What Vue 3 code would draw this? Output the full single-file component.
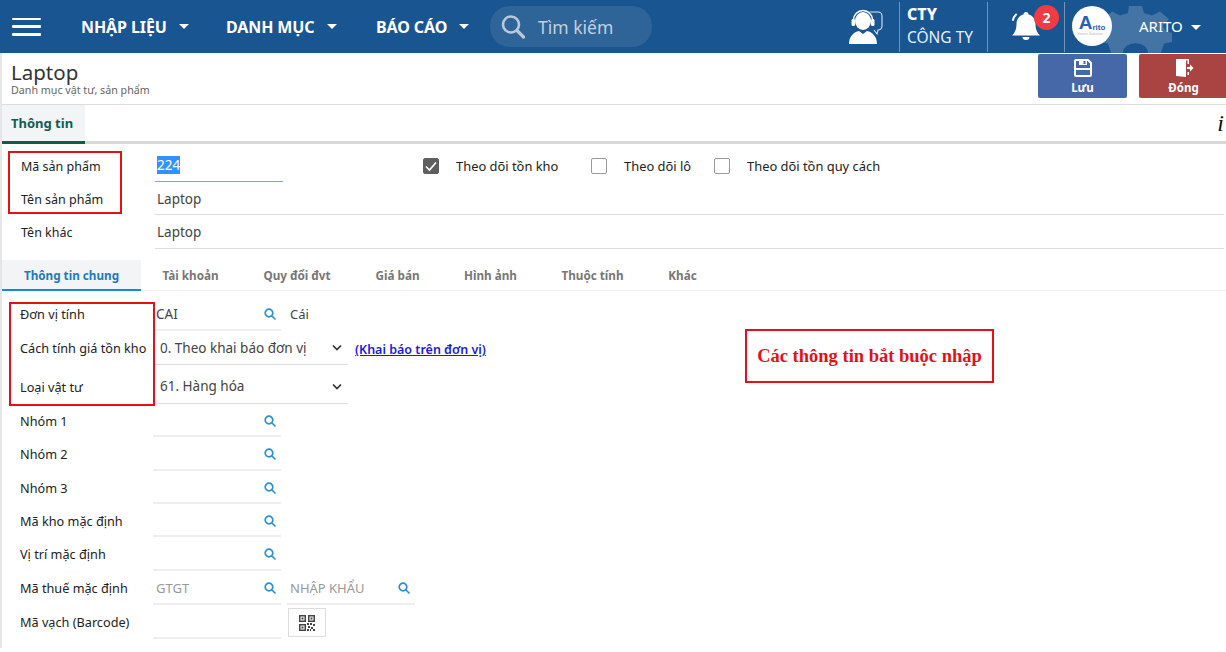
<template>
  <div class="page">
    <header class="topbar">
      <button class="burger"><span></span><span></span><span></span></button>
      <nav class="menu">
        <a v-for="m in menus" :key="m.label" class="menu-item" :style="{ width: m.width + 'px' }">
          {{ m.label }}<i class="caret"></i>
        </a>
      </nav>
      <div class="search">
        <svg width="26" height="26" viewBox="0 0 26 26" fill="none" stroke="#b9c9da" stroke-width="2.6" stroke-linecap="round">
          <circle cx="11" cy="10.5" r="8" />
          <path d="M17 16.5 L23.5 23" stroke-width="3.2" />
        </svg>
        <span>Tìm kiếm</span>
      </div>

      <div class="top-right">
        <svg class="agent" width="36" height="36" viewBox="0 0 36 36">
          <path d="M21 3h9a4 4 0 0 1 4 4v10a4 4 0 0 1-4 4l-1 4-3-4" fill="none" stroke="#fff" stroke-width="1.1" opacity=".85" />
          <ellipse cx="15" cy="12" rx="8" ry="9" fill="#fff" />
          <path d="M5 14V11a10 10 0 0 1 20 0v3" fill="none" stroke="#195591" stroke-width="1.4" />
          <path d="M5.5 11a9.500 9.500 0 0 1 19 0" fill="none" stroke="#fff" stroke-width="1.6" />
          <rect x="3.500" y="10" width="3.500" height="7" rx="1.500" fill="#fff" />
          <rect x="23" y="10" width="3.500" height="7" rx="1.500" fill="#fff" />
          <path d="M1 36c0-8 5-12 10-13l4 3 4-3c5 1 10 5 10 13z" fill="#fff" transform="translate(0,-1)" />
        </svg>
        <div class="company">
          <b>CTY</b>
          <span>CÔNG TY</span>
        </div>
        <div class="bell">
          <svg width="36" height="36" viewBox="0 0 36 36" fill="#fff">
            <path d="M18 3a2.500 2.500 0 0 1 2.500 2.500c4.500 1 7 5 7 9.500 0 6 2 9 4.500 11.500H4C6.500 24 8.500 21 8.500 15c0-4.500 2.500-8.500 7-9.500A2.500 2.500 0 0 1 18 3z" />
            <path d="M14.500 28h7a3.500 3 0 0 1-7 0z" />
            <path d="M5 11c.5-2.500 1.500-4 3-5.500" fill="none" stroke="#fff" stroke-width="2" stroke-linecap="round" />
          </svg>
          <span class="badge">2</span>
        </div>
        <div class="account">
          <svg class="gear" width="72" height="47" viewBox="0 0 72 60" preserveAspectRatio="none" fill="#4474a6">
            <path d="M29 0h13l2 9 8 3 8-5 9 10-6 8 3 8 6 1v12l-8 2-3 12H48a12 12 0 0 0-25 0H11l-3-12-8-2V34l6-1 3-8-6-8 9-10 8 5 8-3z" />
          </svg>
          <div class="avatar">
            <span class="logo-a">A</span><span class="logo-rito">rito</span>
            <span class="logo-sub">Smart Solution</span>
          </div>
          <span class="account-name">ARITO</span>
          <i class="caret"></i>
        </div>
      </div>
    </header>

    <main class="content">
      <section class="title-bar">
        <div class="title">
          <h1>Laptop</h1>
          <p>Danh mục vật tư, sản phẩm</p>
        </div>
        <div class="actions">
          <button class="act save">
            <svg width="20" height="20" viewBox="0 0 20 20" fill="none" stroke="#fff" stroke-width="2">
              <path d="M3 2h12l3 3v12a1 1 0 0 1-1 1H3a1 1 0 0 1-1-1V3a1 1 0 0 1 1-1z" stroke-linejoin="round" />
              <path d="M2 11h16" />
              <rect x="6" y="2" width="8" height="5" fill="#fff" stroke="none" />
              <rect x="10.500" y="3" width="2" height="3" fill="#4768a8" stroke="none" />
            </svg>
            Lưu
          </button>
          <button class="act close">
            <svg width="20" height="20" viewBox="0 0 20 20" fill="#fff">
              <path d="M2 1h10v18l-10-1z" />
              <path d="M12 1h3v5h-1.500V2.500H12zM12 14h1.500v3H15v-3z" />
              <path d="M13 9h3V6.500l3.500 3.500-3.500 3.500V11h-3z" />
            </svg>
            Đóng
          </button>
        </div>
      </section>

      <div class="main-tabs">
        <span class="main-tab">Thông tin</span>
        <span class="info-i">i</span>
      </div>

      <section class="head-form">
        <div class="row h33">
          <label>Mã sản phẩm</label>
          <div class="field code"><mark>224</mark></div>
          <div class="checks">
            <label v-for="c in checks" :key="c.label" class="check" :style="{ width: c.width + 'px' }">
              <span class="box" :class="{ on: c.on }">
                <svg v-if="c.on" width="14" height="14" viewBox="0 0 14 14" fill="none" stroke="#fff" stroke-width="1.600"><path d="M2 7.500 5.500 11 12 3.500" /></svg>
              </span>
              {{ c.label }}
            </label>
          </div>
        </div>
        <div class="row h33">
          <label>Tên sản phẩm</label>
          <div class="field wide">Laptop</div>
        </div>
        <div class="row h34">
          <label>Tên khác</label>
          <div class="field wide">Laptop</div>
        </div>
      </section>

      <div class="sub-tabs">
        <span v-for="(t, i) in subTabs" :key="t.label" class="sub-tab" :class="{ active: i === 0 }" :style="{ width: t.width + 'px' }">{{ t.label }}</span>
      </div>

      <section class="detail-form">
        <div v-for="r in rows" :key="r.label" class="row2" :class="{ low: r.low }" :style="{ height: r.h + 'px' }">
          <label>{{ r.label }}</label>

          <div v-if="r.select" class="field select">
            <span>{{ r.select }}</span>
            <svg width="10" height="7" viewBox="0 0 10 7" fill="none" stroke="#333" stroke-width="1.700"><path d="M1 1.500 5 5.500l4-4" /></svg>
          </div>
          <div v-else class="field lookup" :class="{ muted: r.muted }">
            <span>{{ r.value }}</span>
            <svg v-if="!r.plain" class="lens" width="12" height="12" viewBox="0 0 12 12" fill="none" stroke="#2f8fd0" stroke-width="1.700"><circle cx="5" cy="5" r="3.800" /><path d="M8 8l3 3" stroke-linecap="round" /></svg>
          </div>

          <span v-if="r.note" class="note">{{ r.note }}</span>
          <a v-if="r.link" class="link">{{ r.link }}</a>
          <div v-if="r.second" class="field lookup muted second">
            <span>{{ r.second }}</span>
            <svg class="lens" width="12" height="12" viewBox="0 0 12 12" fill="none" stroke="#2f8fd0" stroke-width="1.700"><circle cx="5" cy="5" r="3.800" /><path d="M8 8l3 3" stroke-linecap="round" /></svg>
          </div>
          <button v-if="r.qr" class="qr">
            <svg width="16" height="16" viewBox="0 0 16 16" fill="#444">
              <path d="M0 0h7v7H0zM1.500 1.500v4h4v-4zM9 0h7v7H9zM10.500 1.500v4h4v-4zM0 9h7v7H0zM1.500 10.500v4h4v-4z" fill-rule="evenodd" />
              <path d="M2.500 2.500h2v2h-2zM11.500 2.500h2v2h-2zM2.500 11.500h2v2h-2zM8 8h2v2H8zM11 8h2v2h-2zM14 9h2v2h-2zM9 11h2v2H9zM12 12h2v2h-2zM8 14h2v2H8zM11 14h1v2h-1zM14 14h2v2h-2z" />
            </svg>
          </button>
        </div>
      </section>

      <!-- khung đỏ chú thích nằm đè lên form -->
      <div class="mark-box box-a"></div>
      <div class="mark-box box-b"></div>
      <div class="mark-box box-c">Các thông tin bắt buộc nhập</div>
    </main>
  </div>
</template>

<script setup>
const menus = [
  { label: "NHẬP LIỆU", width: 145 },
  { label: "DANH MỤC", width: 150 },
  { label: "BÁO CÁO", width: 114 }
];

const checks = [
  { label: "Theo dõi tồn kho", on: true, width: 168 },
  { label: "Theo dõi lô", on: false, width: 123 },
  { label: "Theo dõi tồn quy cách", on: false, width: 180 }
];

const subTabs = [
  { label: "Thông tin chung", width: 139 },
  { label: "Tài khoản", width: 99 },
  { label: "Quy đổi đvt", width: 114 },
  { label: "Giá bán", width: 87 },
  { label: "Hình ảnh", width: 99 },
  { label: "Thuộc tính", width: 105 },
  { label: "Khác", width: 75 }
];

const rows = [
  { label: "Đơn vị tính", value: "CAI", note: "Cái", h: 34 },
  { label: "Cách tính giá tồn kho", select: "0. Theo khai báo đơn vị", link: "(Khai báo trên đơn vị)", h: 34 },
  { label: "Loại vật tư", select: "61. Hàng hóa", low: true, h: 39 },
  { label: "Nhóm 1", h: 33 },
  { label: "Nhóm 2", h: 34 },
  { label: "Nhóm 3", h: 33 },
  { label: "Mã kho mặc định", h: 33 },
  { label: "Vị trí mặc định", h: 34 },
  { label: "Mã thuế mặc định", value: "GTGT", muted: true, second: "NHẬP KHẨU", h: 34 },
  { label: "Mã vạch (Barcode)", plain: true, qr: true, h: 34 }
];
</script>

<style>
html,
body {
  margin: 0;
  background: #fff;
  overflow: hidden;
}
</style>

<style scoped>
.page {
  width: 1226px;
  height: 652px;
  overflow: hidden;
  font-family: "Noto Sans", "Open Sans", sans-serif;
  color: #333;
}
.topbar {
  height: 53px;
  background: #195591;
  display: flex;
  align-items: center;
  color: #fff;
}
.burger {
  width: 29px;
  height: 18px;
  margin-left: 12px;
  padding: 0;
  border: none;
  background: none;
  display: flex;
  flex-direction: column;
  justify-content: space-between;
}
.burger span {
  display: block;
  height: 2.500px;
  background: #fff;
  border-radius: 1px;
}
.menu {
  display: flex;
  margin-left: 40px;
}
.menu-item {
  font-size: 16px;
  font-weight: 700;
  display: flex;
  align-items: center;
  letter-spacing: -0.1px;
  white-space: nowrap;
}
.caret {
  display: inline-block;
  width: 0;
  height: 0;
  margin-left: 12px;
  border-left: 5px solid transparent;
  border-right: 5px solid transparent;
  border-top: 5px solid #fff;
}
.search {
  width: 162px;
  height: 41px;
  margin-left: 0;
  box-sizing: border-box;
  padding-left: 10px;
  border-radius: 20px;
  background: #2f6499;
  display: flex;
  align-items: center;
  gap: 12px;
  color: #c3d0de;
  font-size: 17.500px;
}
.top-right {
  margin-left: auto;
  display: flex;
  align-items: center;
  height: 53px;
}
.agent {
  margin-right: 15px;
}
.company {
  width: 89px;
  height: 50px;
  box-sizing: border-box;
  padding: 0 0 2px 7px;
  border-left: 1px solid #6f95bb;
  border-right: 1px solid #6f95bb;
  display: flex;
  flex-direction: column;
  justify-content: center;
  line-height: 23px;
}
.company b {
  font-size: 16px;
  font-weight: 800;
}
.company span {
  font-size: 15.500px;
  color: #e8eef5;
}
.bell {
  position: relative;
  width: 77px;
  height: 50px;
  box-sizing: border-box;
  padding: 7px 0 0 20px;
  border-right: 1px solid #6f95bb;
}
.badge {
  position: absolute;
  left: 46px;
  top: 3px;
  width: 25px;
  height: 25px;
  border-radius: 50%;
  background: #ef3b42;
  text-align: center;
  font-size: 14px;
  font-weight: 700;
  line-height: 25px;
}
.account {
  position: relative;
  width: 161px;
  height: 53px;
  display: flex;
  align-items: center;
}
.gear {
  position: absolute;
  left: 35px;
  top: 6px;
}
.avatar {
  position: relative;
  width: 40px;
  height: 40px;
  margin: 0 0 1px 7px;
  border-radius: 50%;
  background: #fff;
  display: flex;
  align-items: center;
  justify-content: center;
  font-family: "Liberation Sans", sans-serif;
  color: #2a5fb5;
}
.logo-a {
  font-size: 19px;
  font-weight: 700;
  margin-top: -6px;
}
.logo-rito {
  font-size: 8px;
  font-weight: 700;
  margin-top: 2px;
}
.logo-sub {
  position: absolute;
  left: 5px;
  top: 25px;
  font-size: 4px;
  color: #bbb;
  white-space: nowrap;
}
.account-name {
  position: relative;
  margin: -2px 0 0 27px;
  font-size: 15px;
}
.account .caret {
  position: relative;
  margin-left: 8px;
  margin-top: 2px;
}

.content {
  position: relative;
  height: 595px;
  box-sizing: border-box;
  border-left: 2px solid #e6e6e6;
}
.title-bar {
  height: 51px;
  border-bottom: 1px solid #ddd;
  display: flex;
  justify-content: space-between;
}
.title {
  padding: 7px 0 0 9px;
}
.title h1 {
  margin: 0;
  font-size: 20.500px;
  font-weight: 400;
  line-height: 24px;
  color: #333;
}
.title p {
  margin: 0;
  font-size: 10.700px;
  line-height: 12px;
  color: #666;
}
.actions {
  display: flex;
  gap: 12px;
  padding-top: 1px;
  margin-right: -2px;
}
.act {
  width: 89px;
  height: 44px;
  padding: 4px 0 0;
  border: none;
  border-radius: 2px;
  color: #fff;
  font-family: inherit;
  font-size: 11.500px;
  font-weight: 700;
  display: flex;
  flex-direction: column;
  align-items: center;
  gap: 2px;
}
.act.save {
  background: #4768a8;
}
.act.close {
  background: #a94442;
}
.main-tabs {
  height: 36px;
  border-bottom: 3px solid #d8d8d8;
  display: flex;
  justify-content: space-between;
}
.main-tab {
  width: 83px;
  height: 39px;
  box-sizing: border-box;
  padding-left: 9px;
  background: #f3f4f6;
  border-bottom: 3px solid #0b6049;
  color: #0b5f55;
  font-size: 13px;
  font-weight: 700;
  line-height: 36px;
}
.info-i {
  margin-right: 2px;
  font-family: "Liberation Serif", serif;
  font-style: italic;
  font-size: 24px;
  line-height: 36px;
  color: #111;
}
.head-form {
  padding-top: 5px;
}
.row {
  display: flex;
  align-items: stretch;
}
.h33 {
  height: 33px;
}
.h34 {
  height: 34px;
}
.row > label,
.row2 > label {
  flex: none;
  font-size: 12.500px;
  color: #222;
  display: flex;
  align-items: center;
}
.row > label {
  width: 134px;
  padding: 1px 0 0 19px;
}
.row2 > label {
  width: 133px;
  padding-left: 18px;
  font-size: 12.700px;
  white-space: nowrap;
}
.field {
  box-sizing: border-box;
  border-bottom: 1px solid #ddd;
  font-size: 13.500px;
  color: #444;
  display: flex;
  align-items: center;
}
.field.code {
  width: 128px;
  padding-left: 2px;
  border-bottom-color: #6aaee8;
}
.field.code mark {
  background: #3390ff;
  color: #fff;
  padding: 0;
  line-height: 18px;
  margin-top: -1px;
}
.field.wide {
  width: 1069px;
  padding: 1px 0 0 2px;
}
.checks {
  display: flex;
  margin-left: 140px;
}
.check {
  display: flex;
  align-items: center;
  gap: 17px;
  padding-top: 1px;
  font-size: 12.900px;
  color: #222;
  white-space: nowrap;
}
.box {
  width: 16px;
  height: 16px;
  box-sizing: border-box;
  border: 1px solid #999;
  border-radius: 2px;
  display: flex;
  align-items: center;
  justify-content: center;
  background: #fff;
}
.box.on {
  background: #5f5f5f;
  border-color: #5f5f5f;
}
.sub-tabs {
  height: 31px;
  margin-top: 11px;
  box-sizing: border-box;
  border-bottom: 1px solid #eee;
  display: flex;
}
.sub-tab {
  height: 31px;
  box-sizing: border-box;
  font-size: 11.700px;
  font-weight: 700;
  line-height: 30px;
  text-align: center;
  color: #777;
}
.sub-tab.active {
  background: #f3f4f6;
  border-bottom: 2px solid #1c86cf;
  color: #1a7cc0;
}
.detail-form {
  padding-top: 6px;
}
.row2 {
  display: flex;
  align-items: stretch;
}
.row2.low > label,
.row2.low .select {
  padding-top: 4px;
}
.lookup {
  flex: none;
  width: 128px;
  padding: 0 5px 0 3px;
  justify-content: space-between;
  border-bottom: 2px solid #eee;
}
.lookup span {
  margin-top: 1px;
}
.lookup.muted {
  color: #999;
  font-size: 13px;
}
.lens {
  margin-top: 2px;
}
.select {
  flex: none;
  width: 195px;
  padding: 0 6px 0 7px;
  justify-content: space-between;
}
.note {
  margin-left: 9px;
  font-size: 13px;
  display: flex;
  align-items: center;
  color: #444;
}
.link {
  margin: 3px 0 0 7px;
  font-size: 12.500px;
  font-weight: 600;
  color: #1a1ae0;
  text-decoration: underline;
  display: flex;
  align-items: center;
  white-space: nowrap;
}
.second {
  margin-left: 6px;
}
.qr {
  width: 38px;
  height: 29px;
  margin: 3px 0 0 7px;
  padding: 0;
  border: 1px solid #ddd;
  background: #fff;
  display: flex;
  align-items: center;
  justify-content: center;
}
.mark-box {
  position: absolute;
  box-sizing: border-box;
  border: 2px solid #e3101a;
}
.box-a {
  left: 6px;
  top: 98px;
  width: 114px;
  height: 63px;
}
.box-b {
  left: 7px;
  top: 249px;
  width: 146px;
  height: 104px;
}
.box-c {
  left: 743px;
  top: 276px;
  width: 249px;
  height: 54px;
  background: #fff;
  color: #e3101a;
  font-family: "Liberation Serif", serif;
  font-size: 18.500px;
  font-weight: 700;
  display: flex;
  align-items: center;
  justify-content: center;
}
</style>
